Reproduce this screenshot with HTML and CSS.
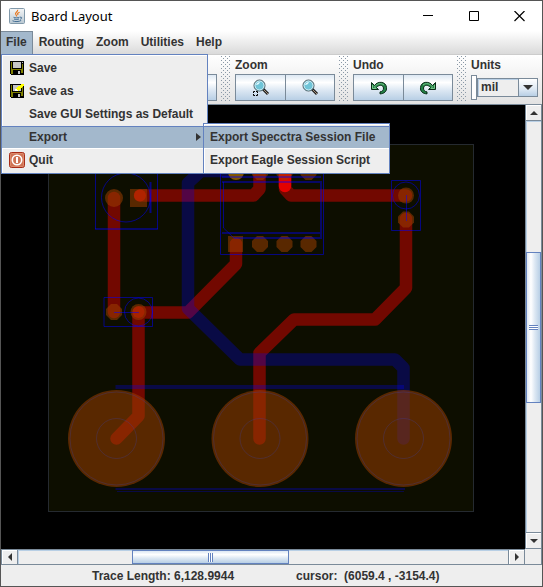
FILE: index.html
```html
<!DOCTYPE html>
<html lang="en">
<head>
<meta charset="utf-8">
<title>Board Layout</title>
<link rel="stylesheet" href="styles.css">
</head>
<body>
<div class="window">
  <header class="titlebar">
    <svg class="app-icon" width="16" height="16" viewBox="0 0 16 16" aria-hidden="true">
      <defs><linearGradient id="ji" x2="0" y2="1"><stop stop-color="#f4f6f7"/><stop offset="1" stop-color="#b9c8d2"/></linearGradient></defs>
      <rect x=".5" y=".5" width="15" height="15" rx="1" fill="url(#ji)" stroke="#8199aa"/>
      <path d="M8.6 1.8c.8 2-3.400 2.600-1.800 4.700.5.8 1 1.200.8 2M10.600 4.200c-2.500.9-2.300 1.800-1.500 2.800" fill="none" stroke="#e87820" stroke-width="1.200"/>
      <path d="M4.500 9.300c1.500.8 4.600.7 6-.1M5 11c1.500.7 3.800.6 5-.1M3.500 12.800c2.300 1.200 6.800 1 8.700-.4M11 9.300c2-.8 2.400 1.300.2 2" fill="none" stroke="#456f94"/>
    </svg>
    <h1 class="title">Board Layout</h1>
    <button class="win-btn" aria-label="Minimize"><svg width="11" height="11"><path d="M1 4.500h10" stroke="#000"/></svg></button>
    <button class="win-btn" aria-label="Maximize"><svg width="11" height="11"><path d="M1.500 .5h9v9h-9z" fill="none" stroke="#000"/></svg></button>
    <button class="win-btn" aria-label="Close"><svg width="11" height="11"><path d="M.5 0l10 10M10.500 0L.5 10" stroke="#000" stroke-width="1.200"/></svg></button>
  </header>

  <nav class="menubar">
    <div class="menu-slot">
      <button class="menu-title open">File</button>
      <div class="popup file-popup">
        <button class="item"><span class="item-icon"><svg width="16" height="16" viewBox="0 0 16 16" shape-rendering="crispEdges"><path d="M1 1h14v14H2l-1-1z" fill="#000"/><path d="M2 2h1v7h10V4h1v9h-2v-3H4v4H2z" fill="#808000"/><path d="M4 2h8v6H4zM13 2h1v1h-1zM9 11h2v3H9z" fill="#c6c6c6"/></svg></span><span>Save</span></button>
        <button class="item"><span class="item-icon"><svg width="16" height="16" viewBox="0 0 16 16" shape-rendering="crispEdges"><path d="M1 1h14v14H2l-1-1z" fill="#000"/><path d="M2 2h1v7h10V4h1v9h-2v-3H4v4H2z" fill="#808000"/><path d="M4 2h8v6H4zM9 11h2v3H9z" fill="#c6c6c6"/><path d="M6 8l1-3 6-4h2v1L9 8z" fill="#ff0"/><path d="M6 8l1-3 2 3z" fill="#fff"/></svg></span><span>Save as</span></button>
        <button class="item"><span class="item-icon"></span><span>Save GUI Settings as Default</span></button>
        <button class="item selected"><span class="item-icon"></span><span>Export</span><svg class="arrow" width="5" height="8"><path d="M0 0l5 4-5 4z" fill="#333"/></svg></button>
        <button class="item"><span class="item-icon"><svg width="16" height="16" viewBox="0 0 16 16"><rect x=".5" y=".5" width="15" height="15" rx="2" fill="#cf7354" stroke="#a82c18"/><rect x="1.500" y="1.500" width="13" height="13" rx="1" fill="none" stroke="#dc8b6c"/><circle cx="8" cy="8" r="4.700" fill="none" stroke="#fff" stroke-width="1.600"/><path d="M8 5v6" stroke="#fff" stroke-width="2"/></svg></span><span>Quit</span></button>
        <div class="popup sub-popup">
          <button class="item selected">Export Specctra Session File</button>
          <button class="item">Export Eagle Session Script</button>
        </div>
      </div>
    </div>
    <button class="menu-title">Routing</button>
    <button class="menu-title">Zoom</button>
    <button class="menu-title">Utilities</button>
    <button class="menu-title">Help</button>
  </nav>

  <div class="toolbar">
    <div class="group first"><div class="tools"><button class="tool" aria-label="Route"></button></div></div>
    <div class="grip"></div>
    <section class="group">
      <h2 class="caption">Zoom</h2>
      <div class="tools">
        <button class="tool" aria-label="Zoom to region"><svg width="18" height="18" viewBox="0 0 18 18"><path d="M11 10l5 5" stroke="#222" stroke-width="3"/><path d="M12 11l4 4" stroke="#a9957f"/><circle cx="7.500" cy="6.500" r="5.500" fill="#70c5d8" stroke="#47545a"/><circle cx="7.500" cy="6.500" r="4.500" fill="none" stroke="#d4eef5"/><path d="M4 6q1-3 4-3-1 3-4 3" fill="#e6faff"/><path d="M1.500 14v-1.500H3M4 12.500h1.500V14M5.500 15v1.500H4M3 16.500H1.500V15" fill="none" stroke="#000"/></svg></button><button class="tool" aria-label="Zoom all"><svg width="18" height="18" viewBox="0 0 18 18"><path d="M11 10l5 5" stroke="#222" stroke-width="3"/><path d="M12 11l4 4" stroke="#a9957f"/><circle cx="7.500" cy="6.500" r="5.500" fill="#70c5d8" stroke="#47545a"/><circle cx="7.500" cy="6.500" r="4.500" fill="none" stroke="#d4eef5"/><path d="M4 6q1-3 4-3-1 3-4 3" fill="#e6faff"/></svg></button>
      </div>
    </section>
    <div class="grip"></div>
    <section class="group">
      <h2 class="caption">Undo</h2>
      <div class="tools">
        <button class="tool" aria-label="Undo"><svg width="18" height="16" viewBox="0 0 18 16"><path d="M1.500 2.500v7h7L6.500 7.500C9 4.500 13 4.500 13.500 8c.2 2.200-1.500 3.700-3.500 3.900v2c4-.2 7-2.400 6.500-6.400C16 1.500 8 .5 4.500 5.500z" fill="#248246" stroke="#092b17"/><path d="M2.500 5v3.500H6L4.500 6.800C7 3.500 11 2.600 14 5" fill="none" stroke="#75c68a"/></svg></button><button class="tool" aria-label="Redo"><svg width="18" height="16" viewBox="0 0 18 16"><g transform="matrix(-1 0 0 1 18 0)"><path d="M1.500 2.500v7h7L6.500 7.500C9 4.500 13 4.500 13.500 8c.2 2.200-1.500 3.700-3.500 3.900v2c4-.2 7-2.400 6.500-6.400C16 1.500 8 .5 4.500 5.500z" fill="#248246" stroke="#092b17"/><path d="M2.500 5v3.500H6L4.500 6.800C7 3.500 11 2.600 14 5" fill="none" stroke="#75c68a"/></g></svg></button>
      </div>
    </section>
    <div class="grip"></div>
    <section class="group">
      <label class="caption" for="unit">Units</label>
      <div class="tools units">
        <input class="factor" type="text" aria-label="Unit factor">
        <div class="combo">
          <select id="unit" class="select"><option>mil</option><option>inch</option><option>mm</option></select>
          <span class="combo-arrow"><svg width="10" height="5"><path d="M0 0h10L5 5z" fill="#333"/></svg></span>
        </div>
      </div>
    </section>
  </div>

  <main class="workspace">
    <svg class="board" viewBox="1 105 524 444" preserveAspectRatio="xMinYMin meet" role="img" aria-label="Circuit board">
      <rect x="48.500" y="144.500" width="425" height="367" fill="#0d0e00" stroke="#252a30"/>
      <g fill="none" stroke="#f00" stroke-width="12.500" stroke-linecap="round" stroke-linejoin="round">
        <g stroke-opacity=".42">
          <path d="M114 198V312"/>
          <path d="M140 195.500H253.500L259.500 189V165"/>
          <path d="M285 168V189L291 195.500H406"/>
          <path d="M406 219V288L375 319.500H294L259.500 353V438.500"/>
          <path d="M236 244V264L188 312.500H138.500V416L116.500 438.500"/>
        </g>
        <path d="M285 168V186" stroke-opacity=".8"/>
      </g>
      <g fill="none" stroke="#00f" stroke-opacity=".27">
        <path d="M236 171H201L188 183V308.500L240 359.500H395L403.500 368V438.500" stroke-width="12.500" stroke-linecap="round" stroke-linejoin="round"/>
        <path d="M115.500 387H404" stroke-width="4"/>
        <path d="M115.500 489H405" stroke-width="2"/>
        <path d="M117 491.500H404"/>
      </g>
      <g fill="#9b3e00" fill-opacity=".54">
        <circle cx="116.500" cy="438.500" r="48.500"/><circle cx="260" cy="438.500" r="48.500"/><circle cx="403.500" cy="438.500" r="48.500"/>
        <circle cx="114" cy="198" r="9"/><path d="M130 189h17v18h-17zM228 236h15v16h-15z"/>
        <path d="M111 304h6l5 5v6l-5 5h-6l-5-5v-6z"/>
        <circle cx="138.500" cy="312" r="8"/>
        <path d="M257 236h6l5 5v6l-5 5h-6l-5-5v-6zM281.500 236h6l5 5v6l-5 5h-6l-5-5v-6zM305.500 236h6l5 5v6l-5 5h-6l-5-5v-6z"/>
        <path d="M257 164h6l5 5v6l-5 5h-6l-5-5v-6zM281.500 164h6l5 5v6l-5 5h-6l-5-5v-6zM305.500 164h6l5 5v6l-5 5h-6l-5-5v-6z"/>
        <circle cx="406" cy="195.500" r="8"/><path d="M403 211.500h6l5 5v6l-5 5h-6l-5-5v-6z"/>
      </g>
      <circle cx="236" cy="172" r="8" fill="#805400"/>
      <g fill="#f02000"><circle cx="140" cy="195.500" r="6" fill-opacity=".4"/><circle cx="138.500" cy="312" r="6" fill-opacity=".3"/></g>
      <g fill="none" stroke="#00f" stroke-opacity=".5">
        <path d="M95.500 150V229M157.500 229V150"/><path d="M95 229H158" stroke-width="2" stroke-opacity=".4"/><circle cx="126" cy="197.500" r="24.500"/><path d="M150.500 182V213" stroke-width="2"/>
        <path d="M104 297.500H152.500V326.500H104z"/><circle cx="138.500" cy="312" r="14"/><path d="M114 312.500H139"/>
        <path d="M220.500 150V254.500H323.500V150"/><path d="M234 238L223.500 228V182"/>
        <path d="M222 177H321M222 182H321V238H234M222 233H321" stroke-width="2" stroke-opacity=".4"/>
        <path d="M391.500 180.500H420.500V230.500H391.500z"/><circle cx="406" cy="195.500" r="13.500"/><path d="M406.500 195V221"/>
      </g>
      <g fill="none" stroke="#4040a0" stroke-opacity=".3">
        <circle cx="116.500" cy="438.500" r="46.500"/><circle cx="260" cy="438.500" r="46.500"/><circle cx="403.500" cy="438.500" r="46.500"/>
        <circle cx="116.500" cy="438.500" r="20"/><circle cx="260" cy="438.500" r="20"/><circle cx="403.500" cy="438.500" r="20"/>
      </g>
    </svg>
    <div class="scroll vertical">
      <button class="step" aria-label="Scroll up"><svg width="8" height="4"><path d="M0 4h8L4 0z" fill="#333"/></svg></button>
      <div class="track"><div class="thumb"></div></div>
      <button class="step" aria-label="Scroll down"><svg width="8" height="4"><path d="M0 0h8L4 4z" fill="#333"/></svg></button>
    </div>
    <div class="scroll horizontal">
      <button class="step" aria-label="Scroll left"><svg width="4" height="8"><path d="M4 0v8L0 4z" fill="#333"/></svg></button>
      <div class="track"><div class="thumb"></div></div>
      <button class="step" aria-label="Scroll right"><svg width="4" height="8"><path d="M0 0v8l4-4z" fill="#333"/></svg></button>
    </div>
    <div class="corner"></div>
  </main>

  <footer class="status">
    <span>Trace Length: 6,128.9944</span>
    <span>cursor:&nbsp; (6059.4 , -3154.4)</span>
  </footer>
</div>
</body>
</html>
```
FILE: styles.css
```css
* { box-sizing: border-box; }
body { margin: 0; color: #333; font: bold 12px/16px "Liberation Sans", Arial, sans-serif; }
button, input, select { margin: 0; padding: 0; border: 0; color: inherit; font: inherit; background: none; }
svg { display: block; flex: none; }

.window { display: flex; flex-direction: column; height: 100vh; border: 1px solid #555; background: #eee; }

.titlebar { display: flex; align-items: center; flex: none; height: 30px; padding-left: 8px; background: #fff; }
.title { flex: 1; margin: 0 0 0 6px; color: #000; font: 13px/20px "Noto Sans", sans-serif; }
.win-btn { display: flex; align-items: center; justify-content: center; width: 46px; height: 30px; }

.menubar { position: relative; z-index: 2; display: flex; flex: none; height: 24px; border-bottom: 1px solid #ccc; background: linear-gradient(#fff, #dadada); }
.menu-slot { position: relative; display: flex; }
.menu-title { height: 23px; padding: 0 6px 2px; white-space: nowrap; }
.menu-title.open { padding: 0 5px 2px; border: 1px solid #7a8a99; border-width: 1px 1px 0 0; background: #a3b8cc; }
.popup { position: absolute; padding: 2px 0 1px; border: 1px solid #6382bf; background: #eee; box-shadow: inset 1px 1px #fff; }
.file-popup { top: 23px; left: 0; width: 207px; }
.file-popup > .item { padding-left: 7px; }
.sub-popup { top: 68px; left: 201px; width: 187px; }
.item { display: flex; align-items: center; width: 100%; height: 23px; padding: 0 6px 1px; border: 1px solid transparent; border-width: 1px 0; text-align: left; white-space: nowrap; }
.item.selected { border-color: #6382bf #fff #fff; background: #a3b8cc; }
.item-icon { width: 16px; height: 16px; margin-right: 4px; }
.arrow { margin-left: auto; }

.toolbar { display: flex; flex: none; gap: 4px; height: 50px; padding: 1px 2px 3px; border-bottom: 1px solid #7a8a99; background: linear-gradient(#fff, #e2e2e2); }
.group { display: flex; flex-direction: column; justify-content: flex-end; }
.group.first { width: 214px; align-items: flex-end; }
.caption { margin: 0; padding: 1px 0; font: inherit; }
.tools { display: flex; height: 27px; }
.tool { display: flex; align-items: center; justify-content: center; width: 51px; border: 1px solid #7a8a99; background: linear-gradient(#dde8f3, #fff 30%, #dde8f3 60%, #b8cfe5); }
.tool + .tool { width: 50px; margin-left: -1px; }
.grip { width: 10px; background: conic-gradient(from 270deg at 1px 1px, #8a98a6 90deg, transparent 0) 0 0 / 4px 4px, conic-gradient(from 270deg at 1px 1px, #8a98a6 90deg, transparent 0) 2px 2px / 4px 4px; }
.units { align-items: center; }
.factor { width: 6px; height: 25px; border: 1px solid #7a8a99; background: #fff; }
.combo { display: flex; width: 61px; height: 19px; border: 1px solid #7a8a99; background: #eee; box-shadow: inset 1px 1px #b8cfe5; }
.select { flex: 1; min-width: 0; padding: 0 0 1px 3px; appearance: none; }
.combo-arrow { display: flex; align-items: center; justify-content: center; width: 19px; border-left: 1px solid #7a8a99; background: linear-gradient(#fff, #dde8f3 60%, #b8cfe5); pointer-events: none; }

.workspace { display: grid; flex: 1; min-height: 0; grid-template: minmax(0, 1fr) 16px / minmax(0, 1fr) 17px; background: #000; }
.board { width: 100%; height: 100%; }
.scroll { display: flex; border: 1px solid #7a8a99; background: #eee; }
.vertical { flex-direction: column; border-top-width: 0; }
.step { display: flex; flex: none; align-items: center; justify-content: center; background: #eee; box-shadow: inset 1px 1px #fff; }
.vertical .step { height: 15px; }
.horizontal .step { width: 15px; }
.track { display: flex; flex: 1; border: 1px solid #7a8a99; box-shadow: inset 1px 1px #b8cfe5; }
.vertical .track { flex-direction: column; padding-top: 131px; border-width: 1px 0; }
.horizontal .track { padding-left: 114px; border-width: 0 1px; }
.thumb { display: flex; align-items: center; justify-content: center; border: 1px solid #6382bf; background: linear-gradient(#dde8f3, #fff 30%, #dde8f3 60%, #b8cfe5); }
.thumb::after { content: ""; }
.vertical .thumb { flex: 0 0 151px; background: linear-gradient(90deg, #dde8f3, #fff 30%, #dde8f3 60%, #b8cfe5); }
.vertical .thumb::after { width: 9px; height: 5px; background: repeating-linear-gradient(#6382bf 0 1px, #fff 1px 2px); }
.horizontal .thumb { flex: 0 0 157px; }
.horizontal .thumb::after { width: 5px; height: 9px; background: repeating-linear-gradient(90deg, #6382bf 0 1px, #fff 1px 2px); }
.corner { border: 1px solid #7a8a99; border-width: 0 1px 1px 0; background: #eee; }

.status { display: flex; flex: none; align-items: center; gap: 62px; height: 21px; padding-left: 91px; white-space: nowrap; }
```
